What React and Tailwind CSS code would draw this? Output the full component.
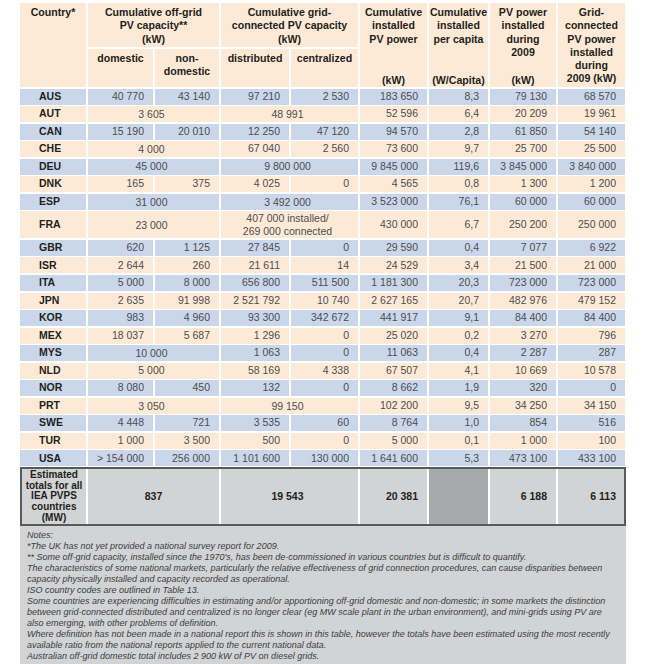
const FONT = { fontFamily: '"Liberation Sans", Arial, sans-serif' };

const COLS = 'grid grid-cols-[66px_65px_64px_68px_67px_67px_59px_66px_67px] gap-x-[2px]';

// rows: country, then cells; {v, s: 2} spans two columns
const rows = [
  ['AUS', '40 770', '43 140', '97 210', '2 530', '183 650', '8,3', '79 130', '68 570'],
  ['AUT', { v: '3 605', s: 2 }, { v: '48 991', s: 2 }, '52 596', '6,4', '20 209', '19 961'],
  ['CAN', '15 190', '20 010', '12 250', '47 120', '94 570', '2,8', '61 850', '54 140'],
  ['CHE', { v: '4 000', s: 2 }, '67 040', '2 560', '73 600', '9,7', '25 700', '25 500'],
  ['DEU', { v: '45 000', s: 2 }, { v: '9 800 000', s: 2 }, '9 845 000', '119,6', '3 845 000', '3 840 000'],
  ['DNK', '165', '375', '4 025', '0', '4 565', '0,8', '1 300', '1 200'],
  ['ESP', { v: '31 000', s: 2 }, { v: '3 492 000', s: 2 }, '3 523 000', '76,1', '60 000', '60 000'],
  ['FRA', { v: '23 000', s: 2 }, { v: ['407 000 installed/', '269 000 connected'], s: 2 }, '430 000', '6,7', '250 200', '250 000'],
  ['GBR', '620', '1 125', '27 845', '0', '29 590', '0,4', '7 077', '6 922'],
  ['ISR', '2 644', '260', '21 611', '14', '24 529', '3,4', '21 500', '21 000'],
  ['ITA', '5 000', '8 000', '656 800', '511 500', '1 181 300', '20,3', '723 000', '723 000'],
  ['JPN', '2 635', '91 998', '2 521 792', '10 740', '2 627 165', '20,7', '482 976', '479 152'],
  ['KOR', '983', '4 960', '93 300', '342 672', '441 917', '9,1', '84 400', '84 400'],
  ['MEX', '18 037', '5 687', '1 296', '0', '25 020', '0,2', '3 270', '796'],
  ['MYS', { v: '10 000', s: 2 }, '1 063', '0', '11 063', '0,4', '2 287', '287'],
  ['NLD', { v: '5 000', s: 2 }, '58 169', '4 338', '67 507', '4,1', '10 669', '10 578'],
  ['NOR', '8 080', '450', '132', '0', '8 662', '1,9', '320', '0'],
  ['PRT', { v: '3 050', s: 2 }, { v: '99 150', s: 2 }, '102 200', '9,5', '34 250', '34 150'],
  ['SWE', '4 448', '721', '3 535', '60', '8 764', '1,0', '854', '516'],
  ['TUR', '1 000', '3 500', '500', '0', '5 000', '0,1', '1 000', '100'],
  ['USA', '> 154 000', '256 000', '1 101 600', '130 000', '1 641 600', '5,3', '473 100', '433 100'],
];

const notes = [
  'Notes:',
  '*The UK has not yet provided a national survey report for 2009.',
  "** Some off-grid capacity, installed since the 1970's, has been de-commissioned in various countries but is difficult to quantify.",
  'The characteristics of some national markets, particularly the relative effectiveness of grid connection procedures, can cause disparities between',
  'capacity physically installed and capacity recorded as operational.',
  'ISO country codes are outlined in Table 13.',
  'Some countries are experiencing difficulties in estimating and/or apportioning off-grid domestic and non-domestic; in some markets the distinction',
  'between grid-connected distributed and centralized is no longer clear (eg MW scale plant in the urban environment), and mini-grids using PV are',
  'also emerging, with other problems of definition.',
  'Where definition has not been made in a national report this is shown in this table, however the totals have been estimated using the most recently',
  'available ratio from the national reports applied to the current national data.',
  'Australian off-grid domestic total includes 2 900 kW of PV on diesel grids.',
];

function Head({ lines, unit, className = '' }) {
  return (
    <div className={`bg-[#fdead6] flex flex-col justify-between items-center text-center pt-[3px] leading-[13.3px] ${className}`}>
      <div>
        {lines.map((l) => (
          <div key={l}>{l}</div>
        ))}
      </div>
      {unit && <div>{unit}</div>}
    </div>
  );
}

function Row({ cells, index }) {
  const bg = index % 2 === 0 ? 'bg-[#cad7ea]' : 'bg-[#fdead6]';
  const [code, ...rest] = cells;
  const tall = code === 'FRA';
  return (
    <div className={`${COLS} ${tall ? 'h-[27px]' : 'h-[16px]'}`}>
      <div className={`${bg} flex items-center pl-[19px] font-bold text-[#231f20]`}>{code}</div>
      {rest.map((c, i) => {
        if (typeof c === 'object') {
          return (
            <div key={i} className={`${bg} col-span-2 flex flex-col items-center justify-center pr-[4px] leading-[12.5px] text-[#4d4d4f]`}>
              {Array.isArray(c.v) ? c.v.map((l) => <div key={l}>{l}</div>) : c.v}
            </div>
          );
        }
        return (
          <div key={i} className={`${bg} flex items-center justify-end pr-[9px] text-[#4d4d4f]`}>
            {c}
          </div>
        );
      })}
    </div>
  );
}

export default function App() {
  return (
    <div className="w-[645px] h-[664px] bg-white overflow-hidden pl-[20px] pt-[3px] text-[10.5px]" style={FONT}>
      {/* header */}
      <div className={`${COLS} grid-rows-[44px_38px] gap-y-[2px] font-bold text-[#231f20] text-[10.6px]`}>
        <Head className="row-span-2" lines={['Country*']} />
        <Head className="col-span-2" lines={['Cumulative off-grid', 'PV capacity**', '(kW)']} />
        <Head className="col-span-2" lines={['Cumulative grid-', 'connected PV capacity', '(kW)']} />
        <Head className="row-span-2" lines={['Cumulative', 'installed', 'PV power']} unit="(kW)" />
        <Head className="row-span-2" lines={['Cumulative', 'installed', 'per capita']} unit="(W/Capita)" />
        <Head className="row-span-2" lines={['PV power', 'installed', 'during', '2009']} unit="(kW)" />
        <Head className="row-span-2" lines={['Grid-', 'connected', 'PV power', 'installed', 'during', '2009 (kW)']} />
        <Head className="pt-[1px]" lines={['domestic']} />
        <Head className="pt-[1px]" lines={['non-', 'domestic']} />
        <Head className="pt-[1px]" lines={['distributed']} />
        <Head className="pt-[1px]" lines={['centralized']} />
      </div>

      {/* body */}
      <div className="mt-[1.5px] flex flex-col gap-y-[1.55px]">
        {rows.map((r, i) => (
          <Row key={r[0]} cells={r} index={i} />
        ))}
      </div>

      {/* totals */}
      <div className="mt-[0.5px] w-[606px] border-2 border-[#58595b] bg-white">
        <div className="grid grid-cols-[64px_65px_64px_68px_67px_67px_59px_66px_66px] gap-x-[2px] h-[55.5px] font-bold text-[#231f20]">
          <div className="bg-[#d1d3d4] flex flex-col items-center justify-center text-center text-[10px] leading-[10.6px]">
            <div>Estimated</div>
            <div>totals for all</div>
            <div>IEA PVPS</div>
            <div>countries</div>
            <div>(MW)</div>
          </div>
          <div className="bg-[#d1d3d4] col-span-2 flex items-center justify-center">837</div>
          <div className="bg-[#d1d3d4] col-span-2 flex items-center justify-center pr-[4px]">19 543</div>
          <div className="bg-[#d1d3d4] flex items-center justify-end pr-[9px]">20 381</div>
          <div className="bg-[#a7a9ac]" />
          <div className="bg-[#d1d3d4] flex items-center justify-end pr-[9px]">6 188</div>
          <div className="bg-[#d1d3d4] flex items-center justify-end pr-[8px]">6 113</div>
        </div>
      </div>

      {/* notes */}
      <div className="w-[606px] bg-[#d1d3d4] pl-[7px] pt-[3.5px] pb-[3px] italic text-[9px] leading-[11px] text-[#3d3d3f]">
        {notes.map((n) => (
          <div key={n} className="whitespace-nowrap">{n}</div>
        ))}
      </div>
    </div>
  );
}
